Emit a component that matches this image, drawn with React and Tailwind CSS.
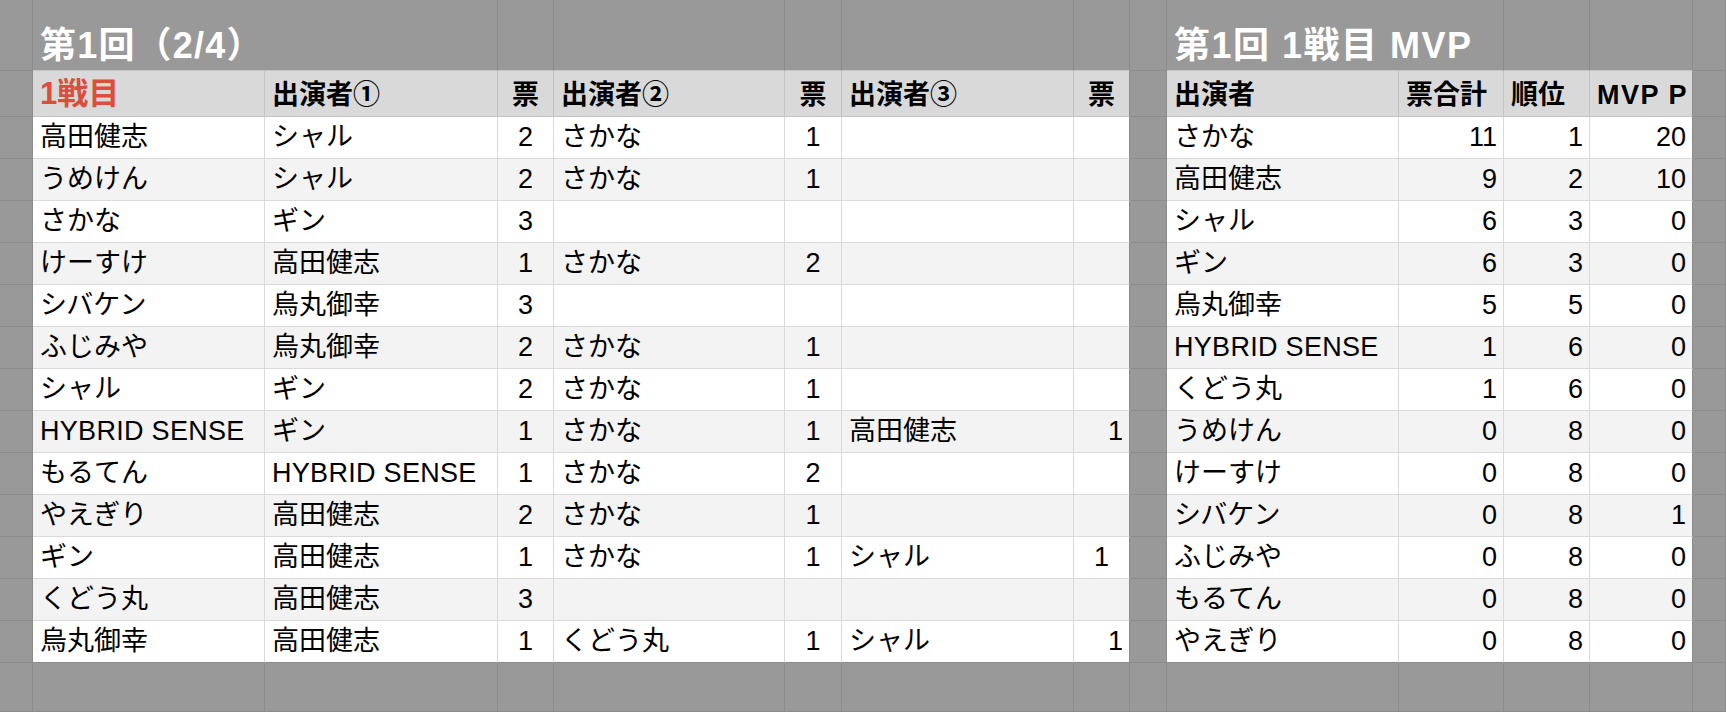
import React from "react";

const OUT = "border-r border-b border-[#8c8c8c] bg-[#999999]";
const TITLE_OVER = "border-r border-b border-r-[#8c8c8c] border-b-[#c4c4c4] bg-[#999999]";

const t1 = [
  ["高田健志", "シャル", "2", "さかな", "1", "", "", ""],
  ["うめけん", "シャル", "2", "さかな", "1", "", "", ""],
  ["さかな", "ギン", "3", "", "", "", "", ""],
  ["けーすけ", "高田健志", "1", "さかな", "2", "", "", ""],
  ["シバケン", "烏丸御幸", "3", "", "", "", "", ""],
  ["ふじみや", "烏丸御幸", "2", "さかな", "1", "", "", ""],
  ["シャル", "ギン", "2", "さかな", "1", "", "", ""],
  ["HYBRID SENSE", "ギン", "1", "さかな", "1", "高田健志", "1", "r"],
  ["もるてん", "HYBRID SENSE", "1", "さかな", "2", "", "", ""],
  ["やえぎり", "高田健志", "2", "さかな", "1", "", "", ""],
  ["ギン", "高田健志", "1", "さかな", "1", "シャル", "1", "c"],
  ["くどう丸", "高田健志", "3", "", "", "", "", ""],
  ["烏丸御幸", "高田健志", "1", "くどう丸", "1", "シャル", "1", "r"],
];

const t2 = [
  ["さかな", "11", "1", "20"],
  ["高田健志", "9", "2", "10"],
  ["シャル", "6", "3", "0"],
  ["ギン", "6", "3", "0"],
  ["烏丸御幸", "5", "5", "0"],
  ["HYBRID SENSE", "1", "6", "0"],
  ["くどう丸", "1", "6", "0"],
  ["うめけん", "0", "8", "0"],
  ["けーすけ", "0", "8", "0"],
  ["シバケン", "0", "8", "1"],
  ["ふじみや", "0", "8", "0"],
  ["もるてん", "0", "8", "0"],
  ["やえぎり", "0", "8", "0"],
];

function Out({ className = "" }) {
  return <div className={OUT + " " + className} />;
}

function H({ children, align = "left", red = false, last = false, latin = false }) {
  const a = align === "center" ? "justify-center" : "justify-start pl-[7px]";
  const b = last ? "border-r-[#8c8c8c]" : "border-r-[#c4c4c4]";
  const size = red
    ? "text-[31px] leading-[31px] text-[#dc4e3c]"
    : latin
    ? "text-[27px] leading-[27px] text-black tracking-[1.5px]"
    : "text-[27px] leading-[27px] text-black";
  return (
    <div
      className={
        "flex items-end pb-[7px] overflow-hidden whitespace-nowrap bg-[#d9d9d9] border-r border-b border-b-[#c4c4c4] font-bold " +
        a +
        " " +
        b +
        " " +
        size
      }
    >
      {children}
    </div>
  );
}

function D({ children, align = "left", alt, last = false, bottom = false }) {
  const a =
    align === "center"
      ? "justify-center"
      : align === "right"
      ? "justify-end pr-[6px]"
      : "justify-start pl-[7px]";
  const bg = alt ? "bg-[#f3f3f3]" : "bg-white";
  const br = last ? "border-r-[#8c8c8c]" : "border-r-[#dadada]";
  const bb = bottom ? "border-b-[#8c8c8c]" : "border-b-[#dadada]";
  const isLatin = typeof children === "string" && /^[A-Z ]+$/.test(children);
  return (
    <div
      className={
        "flex items-end pb-[7px] overflow-hidden whitespace-nowrap border-r border-b text-[27px] leading-[27px] text-black " +
        a +
        " " +
        bg +
        " " +
        br +
        " " +
        bb +
        (isLatin ? " tracking-[0.3px]" : "")
      }
    >
      {children}
    </div>
  );
}

export default function App() {
  return (
    <div className="w-[1726px] h-[712px] overflow-hidden bg-[#999999] grid grid-cols-[33px_232px_233px_56px_231px_57px_232px_56px_37px_232px_105px_86px_103px_1fr] grid-rows-[71px_46px_repeat(13,42px)_1fr] font-['Liberation_Sans','Noto_Sans_CJK_JP',sans-serif]">
      {/* title row */}
      <Out />
      <div className={TITLE_OVER + " col-span-2 flex items-end pl-[7px] pb-[6px] text-[36px] leading-[36px] font-bold text-white whitespace-nowrap tracking-[1.2px]"}>
        第1回（2/4）
      </div>
      <div className={TITLE_OVER} />
      <div className={TITLE_OVER} />
      <div className={TITLE_OVER} />
      <div className={TITLE_OVER} />
      <div className={TITLE_OVER} />
      <Out />
      <div className={TITLE_OVER + " col-span-2 flex items-end pl-[7px] pb-[6px] text-[36px] leading-[36px] font-bold text-white whitespace-nowrap tracking-[1.5px]"}>
        第1回 1戦目 MVP
      </div>
      <div className={TITLE_OVER} />
      <div className={TITLE_OVER} />
      <Out />

      {/* header row */}
      <Out />
      <H red>1戦目</H>
      <H>出演者①</H>
      <H align="center">票</H>
      <H>出演者②</H>
      <H align="center">票</H>
      <H>出演者③</H>
      <H align="center" last>票</H>
      <Out />
      <H>出演者</H>
      <H>票合計</H>
      <H>順位</H>
      <H last latin>MVP P</H>
      <Out />

      {/* data rows */}
      {t1.map((r, i) => {
        const alt = i % 2 === 1;
        const bottom = i === t1.length - 1;
        const m = t2[i];
        return (
          <React.Fragment key={i}>
            <Out />
            <D alt={alt} bottom={bottom}>{r[0]}</D>
            <D alt={alt} bottom={bottom}>{r[1]}</D>
            <D alt={alt} bottom={bottom} align="center">{r[2]}</D>
            <D alt={alt} bottom={bottom}>{r[3]}</D>
            <D alt={alt} bottom={bottom} align="center">{r[4]}</D>
            <D alt={alt} bottom={bottom}>{r[5]}</D>
            <D alt={alt} bottom={bottom} last align={r[7] === "r" ? "right" : "center"}>{r[6]}</D>
            <Out />
            <D alt={alt} bottom={bottom}>{m[0]}</D>
            <D alt={alt} bottom={bottom} align="right">{m[1]}</D>
            <D alt={alt} bottom={bottom} align="right">{m[2]}</D>
            <D alt={alt} bottom={bottom} last align="right">{m[3]}</D>
            <Out />
          </React.Fragment>
        );
      })}

      {/* bottom row */}
      <Out />
      <Out />
      <Out />
      <Out />
      <Out />
      <Out />
      <Out />
      <Out />
      <Out />
      <Out />
      <Out />
      <Out />
      <Out />
      <Out />
    </div>
  );
}
